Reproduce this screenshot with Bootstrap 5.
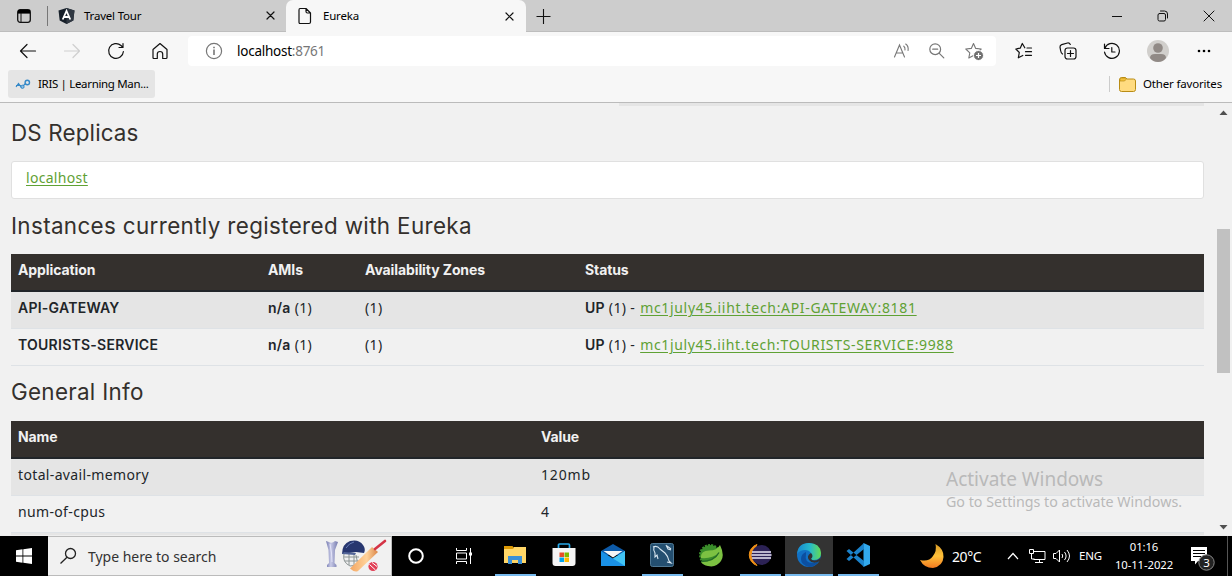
<!DOCTYPE html>
<html lang="en">
<head>
<meta charset="utf-8">
<meta name="viewport" content="width=device-width, initial-scale=1">
<title>Eureka</title>
<link href="https://cdn.jsdelivr.net/npm/bootstrap@5.3.0/dist/css/bootstrap.min.css" rel="stylesheet">
<script src="https://cdn.jsdelivr.net/npm/bootstrap@5.3.0/dist/js/bootstrap.bundle.min.js" defer></script>
<style>
body{font-family:"Noto Sans","Open Sans",sans-serif;font-size:11.5px;letter-spacing:-.2px;color:#000;background:#f7f7f7;height:576px}
svg{display:block;flex:none}
.ln{fill:none;stroke:#111;stroke-width:1.2;stroke-linecap:round;stroke-linejoin:round}
/* tab strip */
.tabstrip{height:32px;background:#cdcdcd}
.stripline{border-bottom:1px solid #bdbdbd}
.tab-a{width:238px;padding-left:10px;padding-right:10px}
.tab-b{width:240px;background:#f7f7f7;border-radius:7px 7px 0 0;padding:0 11px 0 12px}
.winbtn{width:46px}
/* toolbar */
.toolbar{height:38px;padding-left:6px}
.cell{width:44px}
.address{width:808px;height:30px;margin-left:6px;background:#fff;border-radius:4px;font-size:13.5px;letter-spacing:-.25px;padding:0 11px 0 17px}
.favs{height:33px;border-bottom:1px solid #bbb;padding:0 9px 4px 8px}
.favitem{width:147px;height:28px;background:#e5e5e5;border-radius:3px;padding-left:7px;letter-spacing:-.33px}
.avatar{width:22px;height:22px}
/* page */
.viewport{height:433px;background:#f1f1f1;letter-spacing:.35px;font-size:14px}
.page{width:1193px;margin-left:11px}
.page h1{font:400 22.4px/24px Inter,"Noto Sans",sans-serif;color:#34302d;margin:0}
.prev{height:3px;width:585px;background:#e5e5e5}
.hosts .list-group-item{height:38px;padding:4px 14px;line-height:24px;border-color:#e0e0e0;border-radius:3px}
.page a{color:#5fa134;text-underline-offset:1.5px}
.grid{--bs-table-bg:transparent;--bs-table-striped-bg:#e5e5e5;table-layout:fixed;margin:0;border-color:#dee2e6}
.grid>:not(caption)>*>*{padding:4px 7px 8px;line-height:24px}
.grid>thead>tr>th{background:#34302d;color:#f1f1f1;font-family:Inter,"Noto Sans",sans-serif;letter-spacing:-.1px;border-bottom:2px solid #212529;font-weight:700}
.grid td{color:#212529}
.grid b{font-family:Inter,"Noto Sans",sans-serif;font-weight:600;letter-spacing:.25px;line-height:1}
.grid a{letter-spacing:.68px;margin-left:1px}
.sbar{width:17px}
.thumb{width:13px;height:144px;background:#c1c1c1;margin:114px 0 auto}
.watermark{left:946px;top:466px;color:#b9b9b9;font-size:14.25px;line-height:20px;letter-spacing:0}
.watermark div:first-child{font-size:19px;line-height:26px}
/* taskbar */
.taskbar{height:41px;background:#000;color:#fff;margin-top:-1px;border-top:1px solid #eee}
.searchbox{width:344px;background:#f1f1f1;border:1px solid #bbb;border-left:0;color:#333;font-size:14px;letter-spacing:-.03px;padding:0 3px 0 11px}
.app{width:49px;padding:0 4px}
.app>div{border-bottom:2px solid transparent;padding-right:2px}
.app.run>div{border-color:#76b9ed}
.app.front{padding:0}
.app.front>div{background:#333;margin-right:1px;padding:0}
.tray{font-size:14px}
.clock{width:64px;font-size:11.3px;line-height:18px;letter-spacing:-.08px}
</style>
</head>
<body class="d-flex flex-column overflow-hidden position-relative">
<header class="flex-shrink-0">
  <div class="tabstrip d-flex">
    <div class="stripline d-flex align-items-center" style="width:48px"><svg class="ms-3" width="16" height="16"><rect x="1.7" y="1.7" width="12.6" height="12.6" rx="2.5" fill="none" stroke="#111" stroke-width="1.3"/><path d="M2 2h12v3.6H2z"/><path d="M5 5v9" stroke="#111"/></svg><i class="ms-auto" style="width:1px;height:20px;background:#777"></i></div>
    <div class="tab-a stripline d-flex align-items-center">
      <svg width="17" height="18" viewBox="0 0 17 18"><path d="M8.5 1l8 2.500-1.200 10-6.800 3.500-6.800-3.500L.5 3.500z" fill="#17202a"/><path d="M8.5 1l8 2.500-1.200 10-6.800 3.500z" fill="#303842"/><path d="M4.700 12.500l3.800-8.500 3.800 8.500M6 10h5" fill="none" stroke="#fff" stroke-width="1.800"/></svg>
      <span style="margin-left:9px">Travel Tour</span>
      <svg class="ms-auto" width="11" height="11"><path class="ln" d="M2 2l7 7M9 2l-7 7"/></svg>
    </div>
    <div class="tab-b d-flex align-items-center">
      <svg width="14" height="18"><path class="ln" d="M2 1.500h6l4.500 4.500v9q0 1.500-1.500 1.500h-9q-1 0-1-1.500v-12q0-1.500 1-1.500zM8 1.500v3q0 1.500 1.500 1.500h3"/></svg>
      <span style="margin-left:11px">Eureka</span>
      <svg class="ms-auto" width="11" height="11"><path class="ln" d="M2 2l7 7M9 2l-7 7"/></svg>
    </div>
    <div class="stripline d-flex flex-fill">
      <svg class="align-self-center" style="margin-left:9px" width="17" height="16"><path d="M1.500 8.500h14M8.500 1v15" stroke="#111" stroke-width="1.100"/></svg>
      <div class="d-flex ms-auto">
        <div class="winbtn d-flex align-items-center justify-content-center"><svg width="10" height="10"><path d="M0 5.500h10" stroke="#111"/></svg></div>
        <div class="winbtn d-flex align-items-center justify-content-center"><svg width="12" height="12"><rect x="1" y="3.500" width="7.500" height="7.500" rx="1.500" class="ln" style="stroke-width:1"/><path class="ln" style="stroke-width:1" d="M3.500 1h4q3 0 3 3v4"/></svg></div>
        <div class="winbtn d-flex align-items-center justify-content-center"><svg width="12" height="12"><path class="ln" style="stroke-width:1" d="M1 1l10 10M11 1L1 11"/></svg></div>
      </div>
    </div>
  </div>
  <div class="toolbar d-flex align-items-center">
    <div class="cell d-flex justify-content-center"><svg width="18" height="16"><path class="ln" d="M16.500 8H1.500M8 1.500L1.500 8l6.500 6.500"/></svg></div>
    <div class="cell d-flex justify-content-center"><svg width="18" height="16"><path class="ln" style="stroke:#cfcfcf" d="M1.500 8h15M10 1.500L16.500 8 10 14.500"/></svg></div>
    <div class="cell d-flex justify-content-center"><svg width="18" height="18"><path class="ln" d="M16.400 9.500a7.400 7.400 0 1 1-2.400-6L15.500 5M16 1.500V5.500H12"/></svg></div>
    <div class="cell d-flex justify-content-center"><svg width="18" height="18"><path class="ln" d="M2 7.500L9 1.500l7 6V15.500q0 1-1 1h-3.300V12q0-2.500-2.700-2.500T6.300 12v4.500H3q-1 0-1-1z"/></svg></div>
    <div class="address d-flex align-items-center">
      <svg width="18" height="18"><g fill="none" stroke="#777" stroke-width="1.200"><circle cx="9" cy="9" r="7.600"/><path d="M9 7.500v5.500M9 4.700v1.500" stroke-width="1.600"/></g></svg>
      <span style="margin-left:14px">localhost<span style="color:#777">:8761</span></span>
      <div class="d-flex align-items-center ms-auto">
        <svg width="18" height="18"><g fill="none" stroke="#777" stroke-width="1.100" stroke-linecap="round"><path d="M1.500 15L6.500 3l5 12M3.200 11h6.600M10.800 4.200q1.500 1.200 1.200 3.800M12.700 2q3 2 2.400 6.500"/></g></svg>
        <svg style="margin-left:17px" width="18" height="18"><g fill="none" stroke="#777" stroke-width="1.200" stroke-linecap="round"><circle cx="7.200" cy="7.200" r="5.400"/><path d="M4.700 7.200h5M11.300 11.300l4.500 4.500"/></g></svg>
        <svg style="margin-left:19px" width="20" height="19"><path d="M8.500 1.500l2.200 4.900 5.500.6-4 3.800 1 5.200-4.700-2.500L3.800 16l1-5.200L.8 7l5.500-.6z" fill="none" stroke="#777" stroke-width="1.100" stroke-linejoin="round"/><circle cx="13.500" cy="13.500" r="5" fill="#707070" stroke="#fff"/><path d="M13.500 11v5M11 13.500h5" stroke="#fff" stroke-width="1.200"/></svg>
      </div>
    </div>
    <div class="d-flex align-items-center" style="margin-left:6px">
      <div class="cell d-flex justify-content-center"><svg width="18" height="18"><path class="ln" d="M9.800 5.800L7.300 1.500 5.200 6.200.8 7l3.500 3.500-1 5.300 4.500-2.300M12 6h4.500M10.500 9.700h6M10.500 13.300h6"/></svg></div>
      <div class="cell d-flex justify-content-center"><svg width="18" height="18"><rect x="6" y="6" width="11" height="11" rx="2.500" class="ln"/><path class="ln" d="M11.500 8.500v6M8.500 11.500h6M3.500 12Q2 11 1.600 8.500L1 5.200Q.8 3.200 2.700 2.600L8.500 1q2-.3 2.800 1.500"/></svg></div>
      <div class="cell d-flex justify-content-center"><svg width="18" height="18"><path class="ln" d="M1.500 2v4.500H6M1.800 6.500a7.500 7.500 0 1 1-.3 3.500M8.800 5.500v4.500H12"/></svg></div>
      <div class="cell d-flex justify-content-center ps-1"><svg class="avatar" viewBox="0 0 22 22"><circle cx="11" cy="11" r="11" fill="#d1cfcc"/><circle cx="11" cy="8" r="4.800" fill="#918a86"/><path d="M3 18q0-4 5-4h6q5 0 5 4-3 4-8 4t-8-4" fill="#918a86"/></svg></div>
      <div class="cell d-flex justify-content-center ps-2"><svg width="14" height="4"><circle cx="2" cy="2" r="1.300"/><circle cx="7" cy="2" r="1.300"/><circle cx="12" cy="2" r="1.300"/></svg></div>
    </div>
  </div>
  <div class="favs d-flex align-items-center">
    <div class="favitem d-flex align-items-center"><svg width="16" height="14"><path d="M1 10l2.500-3.500 3 4L11 6M1 8.500h5" fill="none" stroke="#3589c8" stroke-width="1.200"/><circle cx="12.300" cy="5.500" r="2.200" fill="none" stroke="#3589c8" stroke-width="1.400"/><circle cx="7.500" cy="9.800" r="1.600" fill="#8bc0e5" stroke="#3589c8"/></svg><span style="margin-left:7px">IRIS | Learning Man...</span></div>
    <i class="ms-auto" style="width:1px;height:16px;background:#ccc"></i>
    <svg style="margin-left:9px" width="17" height="15"><path d="M.5 3q0-2.500 2-2.500h4l1.500 1.500h6.500q2 0 2 2v8.500q0 2-2 2h-12q-2 0-2-2z" fill="#ffdb80" stroke="#b98c15"/><path d="M1 4V2.500Q1 1 2.500 1h4l1 1-2 2z" fill="#f3c13b" stroke="#b98c15" stroke-width=".7"/></svg>
    <span style="margin-left:7px;letter-spacing:-.17px;width:80px" class="text-nowrap">Other favorites</span>
  </div>
</header>

<main class="viewport d-flex flex-shrink-0 overflow-hidden">
  <div class="page">
    <div class="prev ms-auto"></div>
    <h1 style="margin-top:15px;letter-spacing:.15px">DS Replicas</h1>
    <div class="list-group hosts" style="margin-top:16px"><div class="list-group-item"><a href="#" style="letter-spacing:.3px">localhost</a></div></div>
    <h1 style="margin-top:15px;letter-spacing:.36px">Instances currently registered with Eureka</h1>
    <table class="table table-striped grid" style="margin-top:16px">
      <colgroup><col style="width:250px"><col style="width:97px"><col style="width:220px"><col></colgroup>
      <thead><tr><th>Application</th><th>AMIs</th><th>Availability Zones</th><th>Status</th></tr></thead>
      <tbody>
        <tr><td><b>API-GATEWAY</b></td><td><b>n/a</b> (1)</td><td>(1)</td><td><b>UP</b> (1) - <a href="#">mc1july45.iiht.tech:API-GATEWAY:8181</a></td></tr>
        <tr><td><b>TOURISTS-SERVICE</b></td><td><b>n/a</b> (1)</td><td>(1)</td><td><b>UP</b> (1) - <a href="#" style="letter-spacing:.65px">mc1july45.iiht.tech:TOURISTS-SERVICE:9988</a></td></tr>
      </tbody>
    </table>
    <h1 style="margin-top:14px;letter-spacing:.3px">General Info</h1>
    <table class="table table-striped grid" style="margin-top:17px">
      <colgroup><col style="width:523px"><col></colgroup>
      <thead><tr><th>Name</th><th>Value</th></tr></thead>
      <tbody>
        <tr><td>total-avail-memory</td><td><span style="letter-spacing:.85px">120mb</span></td></tr>
        <tr><td>num-of-cpus</td><td>4</td></tr>
        <tr><td></td><td></td></tr>
      </tbody>
    </table>
  </div>
  <div class="sbar ms-auto d-flex flex-column align-items-center">
    <svg style="margin-top:7px" width="9" height="5"><path d="M.5 5l4-4.500 4 4.500z" fill="#505050"/></svg>
    <div class="thumb"></div>
    <svg style="margin-bottom:6px" width="9" height="5"><path d="M.5 0l4 4.500 4-4.500z" fill="#505050"/></svg>
  </div>
</main>

<div class="watermark position-absolute"><div>Activate Windows</div><div>Go to Settings to activate Windows.</div></div>

<footer class="taskbar d-flex flex-shrink-0">
  <div class="d-flex align-items-center justify-content-center" style="width:48px"><svg width="16" height="16"><path fill="#fff" d="M0 2.200l6.500-.9v6.200H0zM7.300 1.200L16 0v7.500H7.300zM0 8.400h6.500v6.300L0 13.800zM7.300 8.400H16V16l-8.700-1.200z"/></svg></div>
  <div class="searchbox d-flex align-items-center">
    <svg width="18" height="18"><g fill="none" stroke="#222" stroke-width="1.300"><circle cx="11.500" cy="6.500" r="5"/><path d="M8 10.200L1.500 16.500"/></g></svg>
    <span style="margin-left:11px">Type here to search</span>
    <svg class="ms-auto" width="64" height="34" viewBox="0 0 64 34">
      <defs><linearGradient id="cup"><stop stop-color="#7378ae"/><stop offset=".4" stop-color="#c8cae7"/><stop offset="1" stop-color="#767bae"/></linearGradient><linearGradient id="bat"><stop stop-color="#f4a662"/><stop offset=".6" stop-color="#ffd29a"/><stop offset="1" stop-color="#da8648"/></linearGradient></defs>
      <path d="M2 2l3 1q3 2 6-1l3 1-3 8-.5 13 2 2v2H3v-2l2-2L4.500 11z" fill="url(#cup)"/><path d="M6 5q2 9 2 18" stroke="#ececff" stroke-width=".8" fill="none"/>
      <path d="M20 15q-2 8 6 12l8-1-2-10M20 18h15M21 22h14M25 15v11M30 15v12" fill="none" stroke="#8c9494" stroke-width="1"/>
      <path d="M18 15Q18 5 26 2q9-2 13 4 3 4 1 8l-8-1z" fill="#27366f"/><path d="M22 9Q25 4 30 3" fill="none" stroke="#667bb5"/><path d="M18 15l2-2 12 1-1 2z" fill="#536598"/>
      <path d="M48 8l6 5-20 19q-3 2-8-2.500z" fill="url(#bat)"/><path d="M51 10L61 2" stroke="#d43346" stroke-width="2.600" stroke-linecap="round"/>
      <circle cx="49" cy="27.500" r="4.600" fill="#e13e55"/><path d="M45.500 25.500l6 5.500M48 23.500l5 4" stroke="#fff" stroke-width="1"/>
    </svg>
  </div>
  <div class="d-flex align-items-center justify-content-center" style="width:48px"><svg width="18" height="18"><circle cx="9" cy="9" r="6.800" fill="none" stroke="#fff" stroke-width="2"/></svg></div>
  <div class="d-flex align-items-center justify-content-center" style="width:51px;padding-right:3px"><svg width="18" height="16"><path d="M1.500 0v2.500h10V0M1.500 16v-2.500h10V16M1.500 5h10v6h-10zM15.500 0v16" fill="none" stroke="#fff"/><path d="M14 4.500h3v3h-3z" fill="#fff"/></svg></div>
  <div class="app run d-flex"><div class="d-flex flex-fill align-items-center justify-content-center"><svg width="22" height="20"><path d="M0 3h9l1-1h12v16H0z" fill="#ffd667"/><path d="M0 1h8.500L10 3 8.500 4H0z" fill="#dc9905"/><path d="M4 19v-8h14v8h-4v-4H8v4z" fill="#3a8fd6"/></svg></div></div>
  <div class="app d-flex"><div class="d-flex flex-fill align-items-center justify-content-center"><svg width="24" height="24"><path d="M6.500 6V2q0-1 1-1h9q1 0 1 1v4" fill="none" stroke="#28a8e8" stroke-width="1.700"/><path d="M.5 5h23v15q0 3-3 3h-17q-3 0-3-3z" fill="#f4f4f4"/><path d="M7.500 9.500H12V14H7.500z" fill="#e84d2a"/><path d="M12.500 9.500H17V14h-4.500z" fill="#7fba00"/><path d="M7.500 14.500H12V19H7.500z" fill="#00a4ef"/><path d="M12.500 14.500H17V19h-4.500z" fill="#ffb900"/></svg></div></div>
  <div class="app d-flex"><div class="d-flex flex-fill align-items-center justify-content-center"><svg width="24" height="24"><path d="M0 8L12 1l12 7v4H0z" fill="#0d5aa8"/><path d="M0 8l12 7.500L24 8v15H0z" fill="#1a91e6"/><path d="M24 8L12 15.500 24 23z" fill="#41c4f5"/><path d="M2.500 8h19L12 14.500z" fill="#f5f5f5"/></svg></div></div>
  <div class="app run d-flex"><div class="d-flex flex-fill align-items-center justify-content-center"><svg width="24" height="24"><rect x=".5" y=".5" width="23" height="23" rx="2" fill="#244f70" stroke="#4f7894"/><path d="M3 4q4-2 7 2l5 4q3 3 4 8l2 2-4-1M4 4q-1 3 1 6v4l2-2 1 4M16 2l2 4 3 1M17 3l4 3" fill="none" stroke="#d7e5ef" stroke-width="1.100"/></svg></div></div>
  <div class="app d-flex"><div class="d-flex flex-fill align-items-center justify-content-center"><svg width="24" height="24"><circle cx="11" cy="12" r="10" fill="#3b8e2b" stroke="#3b8e2b" stroke-width="2" stroke-dasharray="2 1.200"/><path d="M21 2q5 10 1 16-5 7-13 5-5-1-7-4 14 0 18-9-7 6-18 5Q1 8 10 7.500q8 0 11-5.500" fill="#7cc142"/><path d="M2 18.500q13 0 18-9" fill="none" stroke="#256b28" stroke-width="1.300"/></svg></div></div>
  <div class="app run d-flex"><div class="d-flex flex-fill align-items-center justify-content-center"><svg width="24" height="24"><path d="M9 1.500A11 11 0 0 0 9 22.500Q1 16 9 1.500" fill="#f29218" stroke="#f29218"/><circle cx="13.500" cy="12" r="10" fill="#2c2255"/><path d="M4 9h19M3.500 12h20M4 15h19" stroke="#e9e6f5" stroke-width="1.400"/></svg></div></div>
  <div class="app run front d-flex"><div class="d-flex flex-fill align-items-center justify-content-center"><svg width="24" height="24"><defs><linearGradient id="eg" x1="0" x2="1"><stop stop-color="#1687d0"/><stop offset=".55" stop-color="#27b9c8"/><stop offset="1" stop-color="#65dc51"/></linearGradient></defs><circle cx="12" cy="12" r="12" fill="#1170c4"/><path d="M0 11Q1 0 12 0t12 10q0 7-7 7-4 0-3-2 2-2 0-5-2-3-6-3-5 0-8 4" fill="url(#eg)"/><path d="M9 11q-2 9 7 9 3 0 6-2-4 6-10 6-8-2-8-8 0-5 5-7" fill="#0c4fa0"/><path d="M14 10q3 3 0 6 3 3 8 0l2-2-1 4q-7 4-11-1-3-4 2-7" fill="#333"/></svg></div></div>
  <div class="app run d-flex"><div class="d-flex flex-fill align-items-center justify-content-center"><svg width="24" height="24"><path d="M17.500 0L24 3v18l-6.500 3z" fill="#32a9ed"/><path d="M.5 8l2.500-2 15 12v6zM.5 16l2.500 2L18 6V0z" fill="#1b83cc"/></svg></div></div>
  <div class="tray d-flex align-items-center flex-fill" style="padding-left:37px">
    <svg width="24" height="24"><defs><linearGradient id="mn" x2="0" y2="1"><stop stop-color="#d99b25"/><stop offset=".5" stop-color="#ffc13a"/><stop offset="1" stop-color="#f17920"/></linearGradient></defs><path d="M15.500 0Q24 5 23.500 13 23 22 13 24 4 24 0 16q9 2 13-4 4-5 2.500-12" fill="url(#mn)"/></svg>
    <span style="margin-left:8px;letter-spacing:-.4px;width:30px">20°C</span>
    <svg style="margin-left:25px" width="12" height="8"><path d="M1 7l5-5.500L11 7" fill="none" stroke="#fff" stroke-width="1.200"/></svg>
    <svg style="margin-left:10px" width="17" height="16"><path d="M5 3.500h11v8H4.500M10.500 12v2.500M6 14.500h8M.5 1.500h4v4h-4zM2.500 5.500v5.500h3" fill="none" stroke="#fff"/></svg>
    <svg style="margin-left:7px" width="17" height="16"><path d="M.5 5.500H3L6.500 2v12L3 10.500H.5zM9 6q1.500 2 0 4M11.500 4q3.200 4 0 8M14 2q5 6 0 12" fill="none" stroke="#fff"/></svg>
    <span style="margin-left:9px;font-size:11.500px;width:24px">ENG</span>
    <div class="clock text-center" style="margin-left:9px">01:16<br>10-11-2022</div>
    <svg style="margin-left:14px" width="26" height="32"><path d="M1 7h16v14H8l-3 3.500V21H1z" fill="#fff"/><path d="M3 10.500h12M3 13.500h12M3 16.500h8" stroke="#000"/><circle cx="16.500" cy="22.500" r="7.700" fill="#222" stroke="#888"/><text x="16.500" y="26.700" text-anchor="middle" font-size="11.500" fill="#fff">3</text></svg>
    <i class="ms-auto me-1 align-self-stretch" style="width:1px;background:#555"></i>
  </div>
</footer>
</body>
</html>
